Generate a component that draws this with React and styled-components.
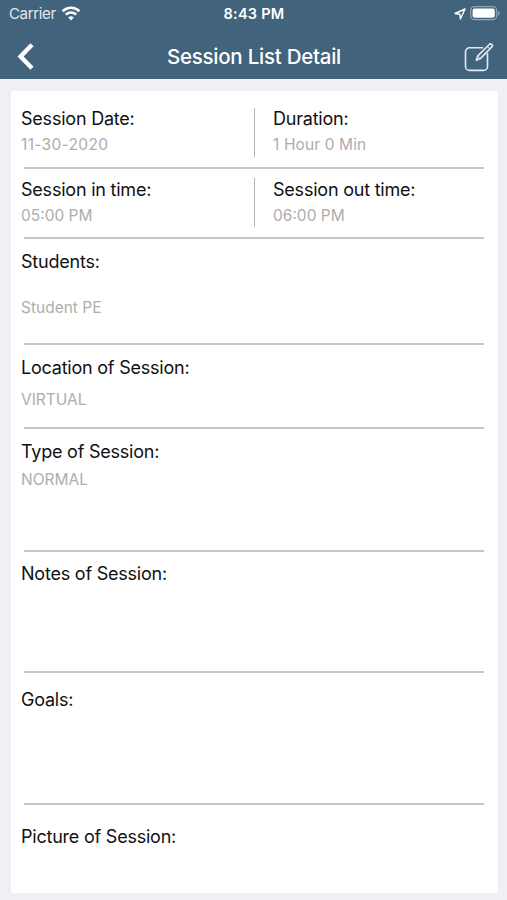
import React from "react"
import styled, { createGlobalStyle } from "styled-components"

const GlobalStyle = createGlobalStyle`
  * {
    box-sizing: border-box;
  }
  body {
    margin: 0;
    background-color: #efeff4;
    font-family: Inter, "Liberation Sans", sans-serif;
  }
`

const details = [
  { label: "Students:", value: "Student PE", height: 106, top: 12, gap: 26 },
  { label: "Location of Session:", value: "VIRTUAL", height: 84, top: 12, gap: 12 },
  { label: "Type of Session:", value: "NORMAL", height: 123, top: 12, gap: 8 },
  { label: "Notes of Session:", height: 121, top: 11 },
  { label: "Goals:", height: 132, top: 16 },
]

const Field = ({ label, value, gap, spacing }) => (
  <div>
    <Label>{label}</Label>
    {value && (
      <Value $gap={gap} $spacing={spacing}>
        {value}
      </Value>
    )}
  </div>
)

const App = () => (
  <>
    <GlobalStyle />
    <Screen>
      <Header>
        <StatusBar>
          <Carrier>
            Carrier
            <svg width="20" height="15" viewBox="0 0 20 15" fill="none" stroke="#fff" strokeWidth="2.6">
              <path d="M1.6 5.2a12 12 0 0 1 16.8 0" />
              <path d="M4.8 8.6a7.5 7.5 0 0 1 10.4 0" />
              <path d="M10 14.500 7.200 11.600a4 4 0 0 1 5.600 0z" fill="#fff" stroke="none" />
            </svg>
          </Carrier>
          <Clock>8:43 PM</Clock>
          <Indicators>
            <svg width="12" height="12" viewBox="0 0 12 12" fill="none" stroke="#fff" strokeWidth="1.4" strokeLinejoin="round">
              <path d="M11 1 1 5.500l4.800.7.6 4.800z" />
            </svg>
            <svg width="31" height="15" viewBox="0 0 31 15">
              <rect x="0.7" y="0.7" width="26" height="13" rx="3.7" fill="none" stroke="#8fa5b5" strokeWidth="1.2" />
              <rect x="2.6" y="2.6" width="22.2" height="9.2" rx="2" fill="#fff" />
              <path d="M28 5v4.600c2.200-.9 2.200-3.700 0-4.600z" fill="#8fa5b5" />
            </svg>
          </Indicators>
        </StatusBar>
        <NavBar>
          <BackButton aria-label="Back">
            <svg width="18" height="28" viewBox="0 0 18 28" fill="none" stroke="#fff" strokeWidth="4.4">
              <path d="M15 1.800 3.600 13.500 15 25.200" />
            </svg>
          </BackButton>
          <Title>Session List Detail</Title>
          <EditButton aria-label="Edit">
            <svg width="30" height="30" viewBox="0 0 30 30" fill="none" stroke="#e4ebf0" strokeWidth="1.6" strokeLinecap="round" strokeLinejoin="round">
              <path d="M18.500 5.800H5.500a4 4 0 0 0-4 4v14.600a4 4 0 0 0 4 4h14a4 4 0 0 0 4-4V11.500" />
              <path d="m12.400 18.300 1.200-4.200L25.200 2.500a1.700 1.700 0 0 1 2.600 2.400L16.300 16.600z" />
              <path d="m13.600 14.100 2.700 2.500M23.300 4.500l2.500 2.400" strokeWidth="1" />
            </svg>
          </EditButton>
        </NavBar>
      </Header>
      <Card>
        <Section $height={78} $top={17}>
          <Columns>
            <Field label="Session Date:" value="11-30-2020" gap={6} spacing={0.33} />
            <Separator />
            <Field label="Duration:" value="1 Hour 0 Min" gap={6} spacing={0.12} />
          </Columns>
        </Section>
        <Section $height={70} $top={10}>
          <Columns>
            <Field label="Session in time:" value="05:00 PM" gap={6} />
            <Separator $offset={-1} />
            <Field label="Session out time:" value="06:00 PM" gap={6} />
          </Columns>
        </Section>
        {details.map(({ label, value, height, top, gap }) => (
          <Section key={label} $height={height} $top={top}>
            <Field label={label} value={value} gap={gap} />
          </Section>
        ))}
        <Section $height={88} $top={21} $last>
          <Field label="Picture of Session:" />
        </Section>
      </Card>
    </Screen>
  </>
)

const Screen = styled.div`
  height: 900px;
  overflow: hidden;
  background-color: #efeff4;
`

const Header = styled.header`
  height: 79px;
  background-color: #42637c;
  color: white;
`

const StatusBar = styled.div`
  display: grid;
  grid-template-columns: 1fr auto 1fr;
  align-items: center;
  height: 27px;
  padding: 0 6px 0 9px;
`

const Carrier = styled.div`
  display: flex;
  align-items: center;
  gap: 5px;
  font-size: 15px;
  letter-spacing: -0.35px;
  color: #e2e9ee;
`

const Clock = styled.span`
  margin-right: 2px;
  font-size: 14.5px;
  font-weight: 600;
  letter-spacing: 0.25px;
`

const Indicators = styled.div`
  display: flex;
  align-items: center;
  justify-content: flex-end;
  gap: 4px;
`

const NavBar = styled.nav`
  display: grid;
  grid-template-columns: 1fr auto 1fr;
  align-items: center;
  height: 52px;
  padding: 7px 13px 0 17px;
`

const IconButton = styled.button`
  display: flex;
  padding: 0;
  border: 0;
  background: none;
`

const BackButton = styled(IconButton)`
  justify-self: start;
`

const EditButton = styled(IconButton)`
  justify-self: end;
`

const Title = styled.h1`
  margin: 0 3px 0 0;
  font-size: 20.5px;
  font-weight: 500;
  line-height: 26px;
  letter-spacing: -0.25px;
`

const Card = styled.main`
  height: 802px;
  margin: 12px 9px 0 11px;
  background-color: white;
  border-radius: 2px;
`

const Section = styled.section`
  height: ${props => props.$height}px;
  padding: ${props => props.$top}px 14px 0 10px;
  background: ${props =>
    props.$last ? "none" : "linear-gradient(#c6c6c6, #c6c6c6) 13px 100% / 460px 2px no-repeat"};
`

const Columns = styled.div`
  display: grid;
  grid-template-columns: 233px 19px 1fr;
`

const Separator = styled.div`
  width: 1px;
  height: 49px;
  margin-top: ${props => props.$offset || 0}px;
  background-color: #b4b4b4;
`

const Label = styled.div`
  font-size: 18px;
  line-height: 22px;
  letter-spacing: -0.22px;
  color: #111;
`

const Value = styled.div`
  margin-top: ${props => props.$gap}px;
  font-size: 15.5px;
  line-height: 18px;
  letter-spacing: ${props => props.$spacing || 0}px;
  color: #adadad;
`

export default App
